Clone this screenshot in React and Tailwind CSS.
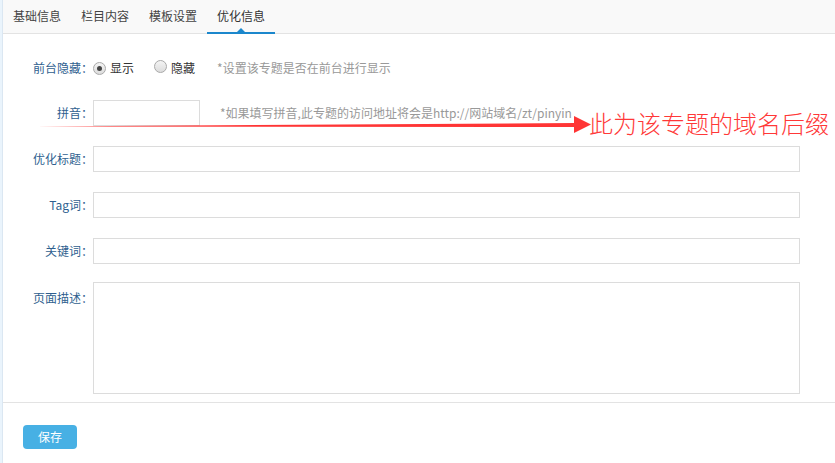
import React from "react";

const font = { fontFamily: '"Noto Sans CJK SC", "Microsoft YaHei", sans-serif' };

const tabs = ["基础信息", "栏目内容", "模板设置", "优化信息"];

function Label({ children, className = "" }) {
  return (
    <div className={`w-[90px] shrink-0 text-right text-[12px] text-[#2f5f8f] ${className}`}>
      {children}
    </div>
  );
}

function Radio({ checked }) {
  return (
    <span className="inline-flex h-[13px] w-[13px] items-center justify-center rounded-full border border-[#a9a9a9] bg-gradient-to-b from-[#f4f4f4] to-[#dcdcdc]">
      {checked && <span className="h-[5px] w-[5px] rounded-full bg-[#444]" />}
    </span>
  );
}

export default function App() {
  return (
    <div className="relative flex h-[463px] w-[835px] overflow-hidden bg-white" style={font}>
      <div className="w-[3px] shrink-0 bg-[#eaf4fc] border-r border-[#dbe7f2]" />
      <div className="flex flex-1 flex-col">
        <div className="flex h-[34px] border-b border-[#e3e3e3] bg-[#f9f9f9]">
          {tabs.map((t, i) => (
            <div
              key={t}
              className={`relative flex w-[68px] items-center justify-center pb-[2px] text-[12px] ${
                i === 3 ? "text-[#333]" : "text-[#444]"
              }`}
            >
              {t}
              {i === 3 && (
                <>
                  <span className="absolute bottom-[-1px] left-0 h-[2px] w-full bg-[#1b87cc]" />
                  <span className="absolute bottom-[1px] left-1/2 h-0 w-0 -translate-x-1/2 border-x-[4px] border-b-[4px] border-x-transparent border-b-[#1b87cc]" />
                </>
              )}
            </div>
          ))}
        </div>

        <div className="flex flex-col pt-[21px]">
          <div className="flex h-[26px] items-center">
            <Label>前台隐藏：</Label>
            <div className="flex items-center text-[12px] text-[#333]">
              <Radio checked />
              <span className="ml-[4px]">显示</span>
              <span className="ml-[20px]">
                <Radio />
              </span>
              <span className="ml-[4px]">隐藏</span>
              <span className="ml-[22px] text-[#999]">*设置该专题是否在前台进行显示</span>
            </div>
          </div>

          <div className="mt-[19px] flex h-[26px] items-center">
            <Label>拼音：</Label>
            <div className="h-[26px] w-[107px] border border-[#dcdcdc]" />
            <span className="ml-[20px] text-[12px] text-[#999]">
              *如果填写拼音,此专题的访问地址将会是http://网站域名/zt/pinyin
            </span>
          </div>

          <div className="mt-[20px] flex h-[26px] items-center">
            <Label>优化标题：</Label>
            <div className="h-[26px] w-[707px] border border-[#dcdcdc]" />
          </div>

          <div className="mt-[20px] flex h-[26px] items-center">
            <Label>Tag词：</Label>
            <div className="h-[26px] w-[707px] border border-[#dcdcdc]" />
          </div>

          <div className="mt-[20px] flex h-[26px] items-center">
            <Label>关键词：</Label>
            <div className="h-[26px] w-[707px] border border-[#dcdcdc]" />
          </div>

          <div className="mt-[18px] flex items-start">
            <Label className="pt-[7px]">页面描述：</Label>
            <div className="h-[112px] w-[707px] border border-[#dcdcdc]" />
          </div>
        </div>

        <div className="mt-[8px] border-t border-[#e3e3e3] pl-[20px] pt-[20px]">
          <button className="h-[24px] w-[54px] rounded-[4px] bg-[#47b0e4] text-[12px] text-white">
            保存
          </button>
        </div>
      </div>

      <svg className="pointer-events-none absolute left-0 top-0" width="835" height="463">
        <polygon points="37,126.5 576,123 576,127" fill="#ff3535" />
        <polygon points="574,116 591,124.5 574,133" fill="#ff3535" />
      </svg>
      <div className="pointer-events-none absolute left-[589px] top-[107px] text-[24px] font-light leading-[32px] text-[#ff3838]">
        此为该专题的域名后缀
      </div>
    </div>
  );
}
